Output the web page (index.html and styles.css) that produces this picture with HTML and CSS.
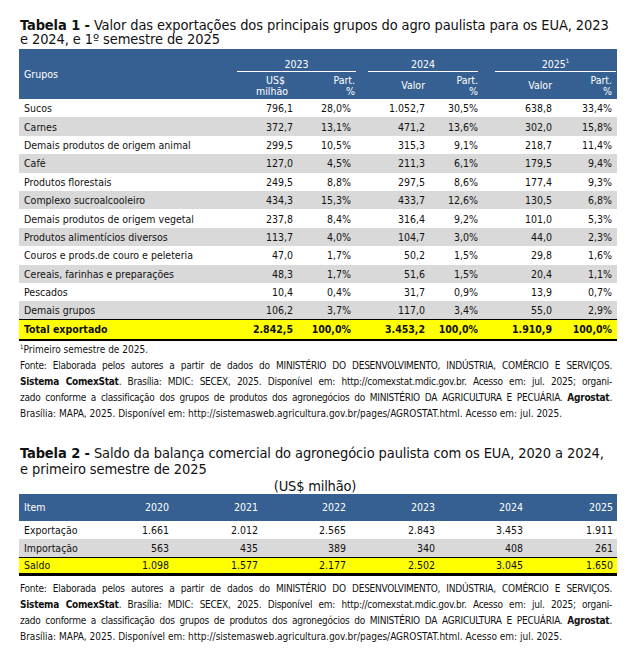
FILE: index.html
```html
<!DOCTYPE html>
<html lang="pt-BR">
<head>
<meta charset="utf-8">
<title>Tabelas agro paulista</title>
<link rel="stylesheet" href="styles.css">
</head>
<body>
<div class="page">
  <h2 class="title t1"><b>Tabela 1 -</b> Valor das exportações dos principais grupos do agro paulista para os EUA, 2023 e 2024, e 1º semestre de 2025</h2>
  <table class="tab tab1">
    <colgroup>
      <col class="w-g"><col class="w-a"><col class="w-b"><col class="w-c"><col class="w-d"><col class="w-e"><col class="w-f">
    </colgroup>
    <thead>
      <tr class="yr">
        <th rowspan="2" class="lbl">Grupos</th>
        <th colspan="2"><div class="grp g23">2023</div></th>
        <th colspan="2"><div class="grp g24">2024</div></th>
        <th colspan="2"><div class="grp g25">2025<sup>1</sup></div></th>
      </tr>
      <tr class="sub">
        <th class="h-a">US$<br>milhão</th>
        <th class="h-b">Part.<br>%</th>
        <th class="h-c">Valor</th>
        <th class="h-d">Part.<br>%</th>
        <th class="h-e">Valor</th>
        <th class="h-f">Part.<br>%</th>
      </tr>
    </thead>
    <tbody>
      <tr><td>Sucos</td><td>796,1</td><td>28,0%</td><td>1.052,7</td><td>30,5%</td><td>638,8</td><td>33,4%</td></tr>
      <tr class="alt"><td>Carnes</td><td>372,7</td><td>13,1%</td><td>471,2</td><td>13,6%</td><td>302,0</td><td>15,8%</td></tr>
      <tr><td>Demais produtos de origem animal</td><td>299,5</td><td>10,5%</td><td>315,3</td><td>9,1%</td><td>218,7</td><td>11,4%</td></tr>
      <tr class="alt"><td>Café</td><td>127,0</td><td>4,5%</td><td>211,3</td><td>6,1%</td><td>179,5</td><td>9,4%</td></tr>
      <tr><td>Produtos florestais</td><td>249,5</td><td>8,8%</td><td>297,5</td><td>8,6%</td><td>177,4</td><td>9,3%</td></tr>
      <tr class="alt"><td>Complexo sucroalcooleiro</td><td>434,3</td><td>15,3%</td><td>433,7</td><td>12,6%</td><td>130,5</td><td>6,8%</td></tr>
      <tr><td>Demais produtos de origem vegetal</td><td>237,8</td><td>8,4%</td><td>316,4</td><td>9,2%</td><td>101,0</td><td>5,3%</td></tr>
      <tr class="alt"><td>Produtos alimentícios diversos</td><td>113,7</td><td>4,0%</td><td>104,7</td><td>3,0%</td><td>44,0</td><td>2,3%</td></tr>
      <tr><td>Couros e prods.de couro e peleteria</td><td>47,0</td><td>1,7%</td><td>50,2</td><td>1,5%</td><td>29,8</td><td>1,6%</td></tr>
      <tr class="alt"><td>Cereais, farinhas e preparações</td><td>48,3</td><td>1,7%</td><td>51,6</td><td>1,5%</td><td>20,4</td><td>1,1%</td></tr>
      <tr><td>Pescados</td><td>10,4</td><td>0,4%</td><td>31,7</td><td>0,9%</td><td>13,9</td><td>0,7%</td></tr>
      <tr class="alt"><td>Demais grupos</td><td>106,2</td><td>3,7%</td><td>117,0</td><td>3,4%</td><td>55,0</td><td>2,9%</td></tr>
      <tr class="total"><td>Total exportado</td><td>2.842,5</td><td>100,0%</td><td>3.453,2</td><td>100,0%</td><td>1.910,9</td><td>100,0%</td></tr>
    </tbody>
  </table>
  <div class="notes n1">
    <p class="foot1"><sup>1</sup>Primeiro semestre de 2025.</p>
    <p class="j">Fonte: Elaborada pelos autores a partir de dados do MINISTÉRIO DO DESENVOLVIMENTO, INDÚSTRIA, COMÉRCIO E SERVIÇOS.</p>
    <p class="j"><b>Sistema ComexStat</b>. Brasília: MDIC: SECEX, 2025. Disponível em: http://comexstat.mdic.gov.br. Acesso em: jul. 2025; organi-</p>
    <p class="j">zado conforme a classificação dos grupos de produtos dos agronegócios do MINISTÉRIO DA AGRICULTURA E PECUÁRIA. <b>Agrostat</b>.</p>
    <p>Brasília: MAPA, 2025. Disponível em: http://sistemasweb.agricultura.gov.br/pages/AGROSTAT.html. Acesso em: jul. 2025.</p>
  </div>

  <h2 class="title t2"><b>Tabela 2 -</b> Saldo da balança comercial do agronegócio paulista com os EUA, 2020 a 2024, e primeiro semestre de 2025</h2>
  <div class="unit">(US$ milhão)</div>
  <table class="tab tab2">
    <colgroup>
      <col class="v-i"><col class="v-1"><col class="v-2"><col class="v-3"><col class="v-4"><col class="v-5"><col class="v-6">
    </colgroup>
    <thead>
      <tr><th class="lbl">Item</th><th>2020</th><th>2021</th><th>2022</th><th>2023</th><th>2024</th><th>2025</th></tr>
    </thead>
    <tbody>
      <tr><td>Exportação</td><td>1.661</td><td>2.012</td><td>2.565</td><td>2.843</td><td>3.453</td><td>1.911</td></tr>
      <tr class="alt"><td>Importação</td><td>563</td><td>435</td><td>389</td><td>340</td><td>408</td><td>261</td></tr>
      <tr class="total"><td>Saldo</td><td>1.098</td><td>1.577</td><td>2.177</td><td>2.502</td><td>3.045</td><td>1.650</td></tr>
    </tbody>
  </table>
  <div class="notes n2">
    <p class="j">Fonte: Elaborada pelos autores a partir de dados do MINISTÉRIO DO DESENVOLVIMENTO, INDÚSTRIA, COMÉRCIO E SERVIÇOS.</p>
    <p class="j"><b>Sistema ComexStat</b>. Brasília: MDIC: SECEX, 2025. Disponível em: http://comexstat.mdic.gov.br. Acesso em: jul. 2025; organi-</p>
    <p class="j">zado conforme a classificação dos grupos de produtos dos agronegócios do MINISTÉRIO DA AGRICULTURA E PECUÁRIA. <b>Agrostat</b>.</p>
    <p>Brasília: MAPA, 2025. Disponível em: http://sistemasweb.agricultura.gov.br/pages/AGROSTAT.html. Acesso em: jul. 2025.</p>
  </div>
</div>
</body>
</html>
```
FILE: styles.css
```css
* { box-sizing: border-box; }
html, body { margin: 0; padding: 0; background: #fff; }
body {
  font-family: "DejaVu Sans Condensed", "DejaVu Sans", sans-serif;
  color: #111;
}
.page {
  width: 630px;
  padding: 18px 13px 0 19px;
}
.title {
  margin: 0;
  width: 593px;
  font-size: 14.5px;
  font-weight: normal;
  letter-spacing: -0.1px;
  line-height: 14px;
  padding-left: 1px;
}
.title b { font-weight: bold; }
.t1 { margin-bottom: 3px; }
.tab {
  width: 598px;
  border-collapse: collapse;
  table-layout: fixed;
  font-size: 10.5px;
}
.tab th {
  background: #376092;
  color: #fff;
  font-weight: normal;
  padding: 0;
}
.tab td {
  padding: 0;
  height: 18.4px;
  text-align: right;
  white-space: nowrap;
}
.tab td:first-child { text-align: left; padding-left: 5px; }
.tab .lbl { text-align: left; padding-left: 5px; }
.tab tr.alt td { background: #d9d9d9; }
.tab tr.total td {
  background: #ffff00;
  font-weight: bold;
  border-top: 1px solid #000;
  border-bottom: 2.5px solid #000;
  height: 20px;
}

/* table 1 */
.w-g { width: 217px; }
.w-a { width: 64px; }
.w-b { width: 62px; }
.w-c { width: 70px; }
.w-d { width: 56px; }
.w-e { width: 72px; }
.w-f { width: 57px; }
.tab1 tr.yr th { height: 23px; vertical-align: bottom; }
.tab1 tr.yr th.lbl { vertical-align: middle; }
.tab1 tr.sub th {
  height: 27px;
  line-height: 11px;
  text-align: right;
  vertical-align: middle;
}
.grp {
  border-bottom: 1px solid #fff;
  text-align: center;
  line-height: 12px;
  padding-bottom: 1px;
}
.grp sup { font-size: 6px; vertical-align: 5px; line-height: 0; }
.g23 { margin: 0 6px 0 1px; }
.g24 { margin: 0 10px 0 6px; }
.g25 { margin: 0 1px 0 7px; }
.tab1 .h-a { padding-right: 15px; text-align: center; padding-left: 20px; }
.tab1 .h-b { padding-right: 7px; }
.tab1 .h-c { padding-right: 7px; }
.tab1 .h-d { padding-right: 10px; }
.tab1 .h-e { padding-right: 8px; }
.tab1 .h-f { padding-right: 5px; }
.tab1 td:nth-child(2) { padding-right: 7px; }
.tab1 td:nth-child(3) { padding-right: 11px; }
.tab1 td:nth-child(4) { padding-right: 7px; }
.tab1 td:nth-child(5) { padding-right: 10px; }
.tab1 td:nth-child(6) { padding-right: 8px; }
.tab1 td:nth-child(7) { padding-right: 5px; }

/* notes */
.notes {
  width: 593px;
  font-size: 10px;
  line-height: 16px;
  padding-left: 1px;
}
.notes p { margin: 0; white-space: nowrap; }
.notes p.j { text-align: justify; text-align-last: justify; letter-spacing: -0.25px; }
.notes b { font-weight: bold; }
.foot1 { margin-top: 1px !important; }
.foot1 sup { font-size: 6px; vertical-align: 4px; line-height: 0; }
.n1 { margin-bottom: 23px; }

/* table 2 */
.t2 { line-height: 16.5px; }
.unit {
  text-align: center;
  font-size: 14.5px;
  letter-spacing: -0.2px;
  line-height: 16px;
  margin-top: 0;
  padding-right: 6px;
}
.v-i { width: 81px; }
.v-1 { width: 74px; }
.v-2 { width: 89px; }
.v-3 { width: 88px; }
.v-4 { width: 89px; }
.v-5 { width: 88px; }
.v-6 { width: 89px; }
.tab2 th { height: 27px; text-align: right; padding-right: 5px; }
.tab2 th.lbl { text-align: left; }
.tab2 td { padding-right: 5px; }
.tab2 th:last-child, .tab2 td:last-child { padding-right: 4px; }
.tab2 tr.total td { font-weight: normal; border-top: 1.5px solid #000; border-bottom: 3px solid #000; height: 17px; }
.n2 { margin-top: 5px; }
```
